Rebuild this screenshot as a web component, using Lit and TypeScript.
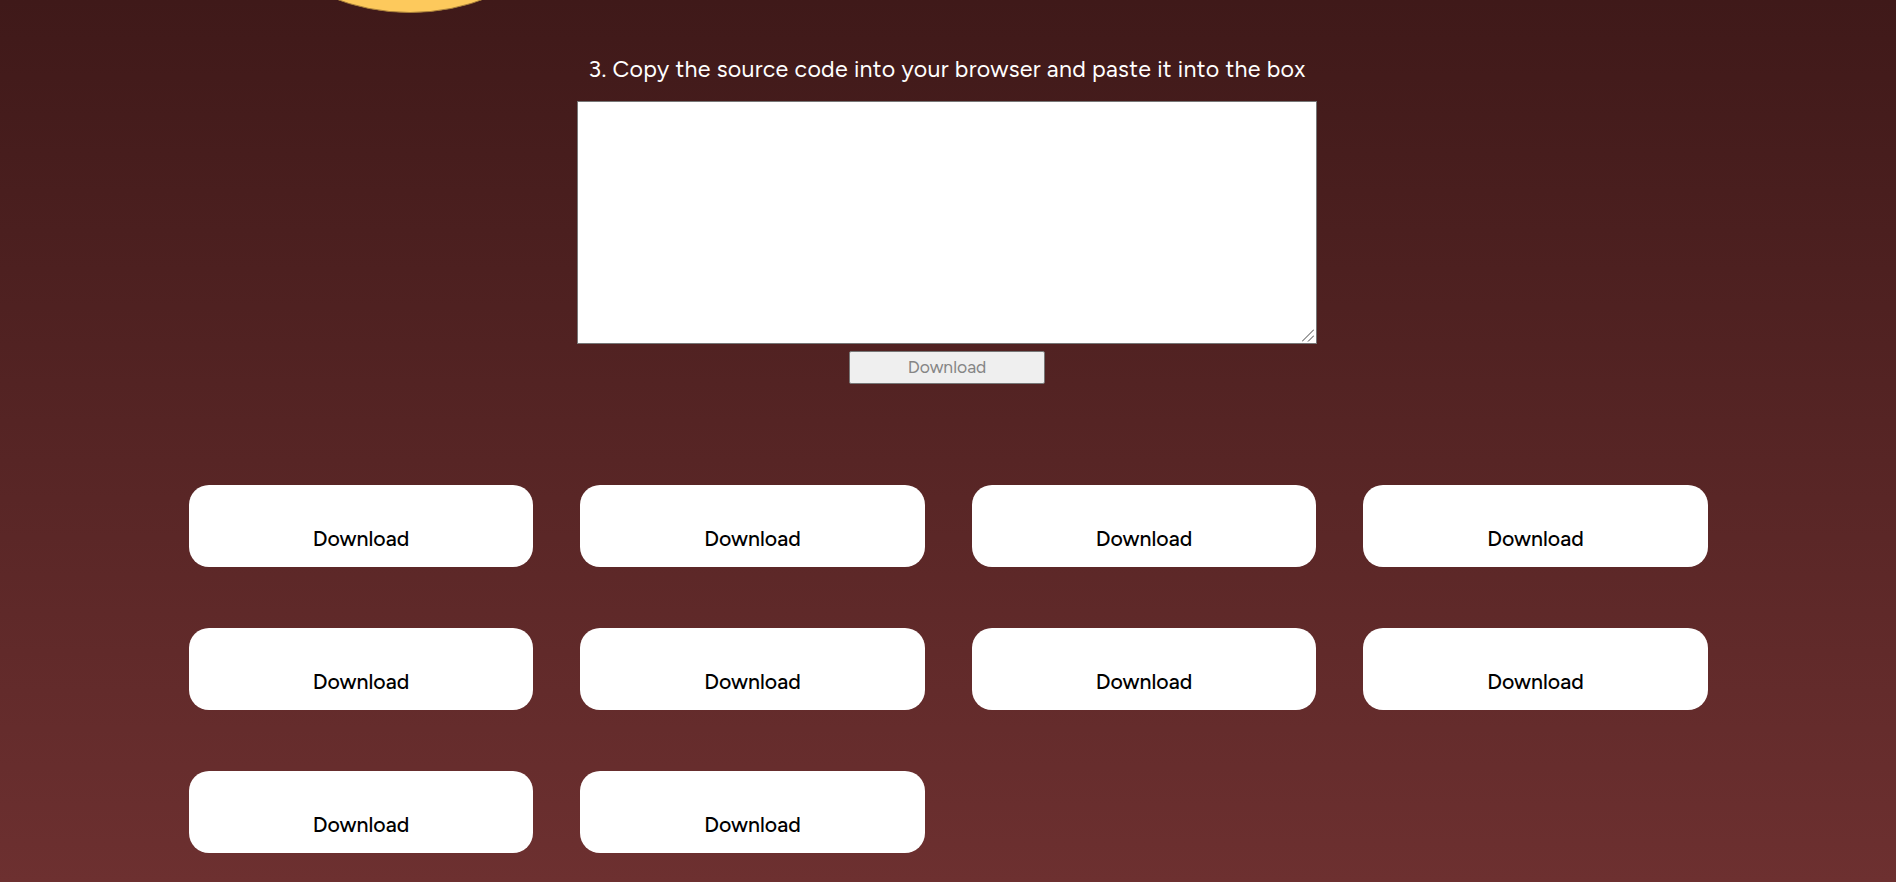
import { LitElement, html, css } from 'lit';
import { customElement, property } from 'lit/decorators.js';

@customElement('download-card')
export class DownloadCard extends LitElement {
    @property()
    label = 'Download';

    static styles = css`
        :host {
            display: block;
        }

        .card {
            display: flex;
            align-items: flex-end;
            justify-content: center;
            box-sizing: border-box;
            height: 82px;
            padding-bottom: 13px;
            border-radius: 20px;
            background-color: white;
        }

        .link {
            color: black;
            font-family: Figtree, Inter, 'Open Sans', sans-serif;
            font-size: 21.3px;
            font-weight: 500;
            line-height: 30px;
            text-decoration: none;
        }
    `;

    override render() {
        return html`<div class="card"><a class="link" href="#">${this.label}</a></div>`;
    }
}

@customElement('app-root')
export class AppRoot extends LitElement {
    @property({ type: Number })
    count = 10;

    static styles = css`
        :host {
            display: block;
            position: relative;
            box-sizing: border-box;
            height: 882px;
            overflow: hidden;
            background: linear-gradient(#3f1919, #6d3030);
            font-family: Figtree, Inter, 'Open Sans', sans-serif;
        }

        .circle {
            position: absolute;
            left: 198px;
            top: -411px;
            box-sizing: border-box;
            width: 424px;
            height: 424px;
            border: 1px solid #a87f3a;
            border-radius: 50%;
            background-color: #fdc95c;
        }

        .step {
            display: flex;
            flex-direction: column;
            align-items: center;
            padding: 54px 2px 0 0;
        }

        .title {
            margin: 0 0 17px;
            color: white;
            font-size: 23.2px;
            font-weight: 450;
            letter-spacing: 0.28px;
            line-height: 30px;
            white-space: nowrap;
        }

        .box {
            position: relative;
            display: flex;
            margin-bottom: 7px;
        }

        .source {
            box-sizing: border-box;
            width: 740px;
            height: 243px;
            margin: 0;
            border: 1px solid #767676;
            border-radius: 0;
            background-color: white;
            resize: none;
        }

        .grip {
            position: absolute;
            right: 3px;
            bottom: 2px;
            pointer-events: none;
        }

        .submit {
            box-sizing: border-box;
            width: 196px;
            height: 33px;
            padding: 0 0 3px;
            border: 1px solid #767676;
            border-radius: 2px;
            background-color: #efefef;
            color: #858585;
            font-family: inherit;
            font-size: 17.5px;
        }

        .downloads {
            display: grid;
            grid-template-columns: repeat(4, 344.5px);
            gap: 60.8px 47px;
            margin: 101.2px 0 0 188.8px;
        }
    `;

    override render() {
        return html`
            <div class="circle"></div>
            <div class="step">
                <h2 class="title">3. Copy the source code into your browser and paste it into the box</h2>
                <div class="box">
                    <textarea class="source"></textarea>
                    <svg class="grip" width="12" height="13" viewBox="0 0 12 13" stroke="#444" fill="none">
                        <path d="M0 12.5 L12 0.5 M6 12.5 L12 6.5" />
                    </svg>
                </div>
                <button class="submit" disabled>Download</button>
            </div>
            <div class="downloads">${Array.from({ length: this.count }, () => html`<download-card></download-card>`)}</div>
        `;
    }
}
